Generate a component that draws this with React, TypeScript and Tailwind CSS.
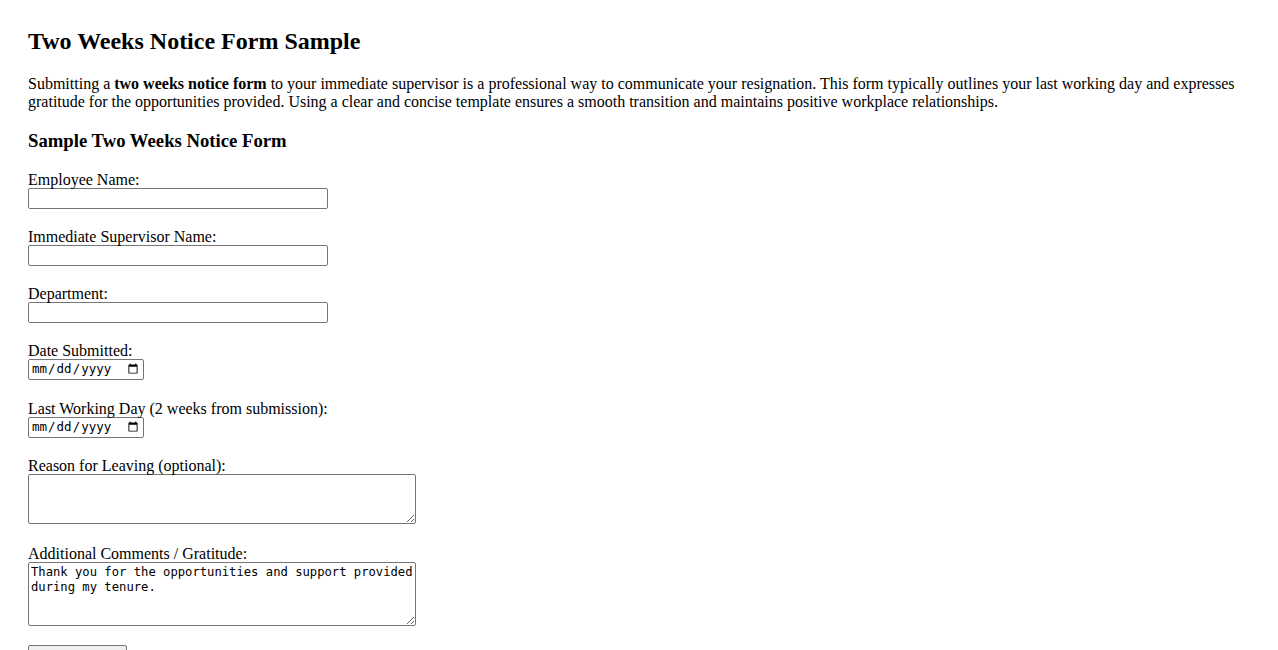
import React from "react";

const serif = "font-['Liberation_Serif','Times_New_Roman',serif]";
const mono = "font-['DejaVu_Sans_Mono','Liberation_Mono',monospace]";

function Label({ children }: { children: React.ReactNode }) {
  return <label className="block text-[16px] leading-[17px] text-black">{children}</label>;
}

const textInput =
  "block w-[300px] h-[21px] border border-[#767676] rounded-[2px] bg-white px-[2px] py-[1px] text-[13.33px] font-['Liberation_Sans',Arial,sans-serif] outline-none";
const dateInput = `block w-[116px] h-[21px] border border-[#767676] rounded-[2px] bg-white pl-[2px] pr-[2px] py-0 text-[12.5px] ${mono} text-black outline-none`;
const textArea = `block w-[388px] border border-[#767676] rounded-[2px] bg-white px-[2px] py-[2px] text-[12.2px] leading-[15px] ${mono} text-black outline-none`;

export default function App() {
  return (
    <div className={`h-[650px] overflow-hidden bg-white text-black ${serif}`}>
      <div className="px-[28px] pt-[28px]">
        <h1 className="text-[24px] font-bold leading-[27.6px]">Two Weeks Notice Form Sample</h1>
        <p className="mt-[19px] text-[16px] leading-[18.4px]">
          Submitting a <strong className="font-bold">two weeks notice form</strong> to your immediate supervisor is a
          professional way to communicate your resignation. This form typically outlines your last working day and
          expresses gratitude for the opportunities provided. Using a clear and concise template ensures a smooth
          transition and maintains positive workplace relationships.
        </p>
        <h3 className="mt-[19px] text-[18.72px] font-bold leading-[21.5px]">Sample Two Weeks Notice Form</h3>
        <form className="mt-[19px]" onSubmit={(e) => e.preventDefault()}>
          <div className="mb-[19px]">
            <Label>Employee Name:</Label>
            <input type="text" className={textInput} />
          </div>
          <div className="mb-[19px]">
            <Label>Immediate Supervisor Name:</Label>
            <input type="text" className={textInput} />
          </div>
          <div className="mb-[19px]">
            <Label>Department:</Label>
            <input type="text" className={textInput} />
          </div>
          <div className="mb-[20px]">
            <Label>Date Submitted:</Label>
            <input type="date" className={dateInput} />
          </div>
          <div className="mb-[19px]">
            <Label>Last Working Day (2 weeks from submission):</Label>
            <input type="date" className={dateInput} />
          </div>
          <div className="mb-[21px]">
            <Label>Reason for Leaving (optional):</Label>
            <textarea className={`${textArea} h-[50px]`} />
          </div>
          <div className="mb-[19px]">
            <Label>Additional Comments / Gratitude:</Label>
            <textarea
              className={`${textArea} h-[64px]`}
              defaultValue="Thank you for the opportunities and support provided during my tenure."
            />
          </div>
          <button
            type="submit"
            className="block w-[99px] h-[21px] border border-[#767676] rounded-[2px] bg-[#efefef] text-[13.33px] font-['Liberation_Sans',Arial,sans-serif] text-black"
          >
            Submit Notice
          </button>
        </form>
      </div>
    </div>
  );
}
